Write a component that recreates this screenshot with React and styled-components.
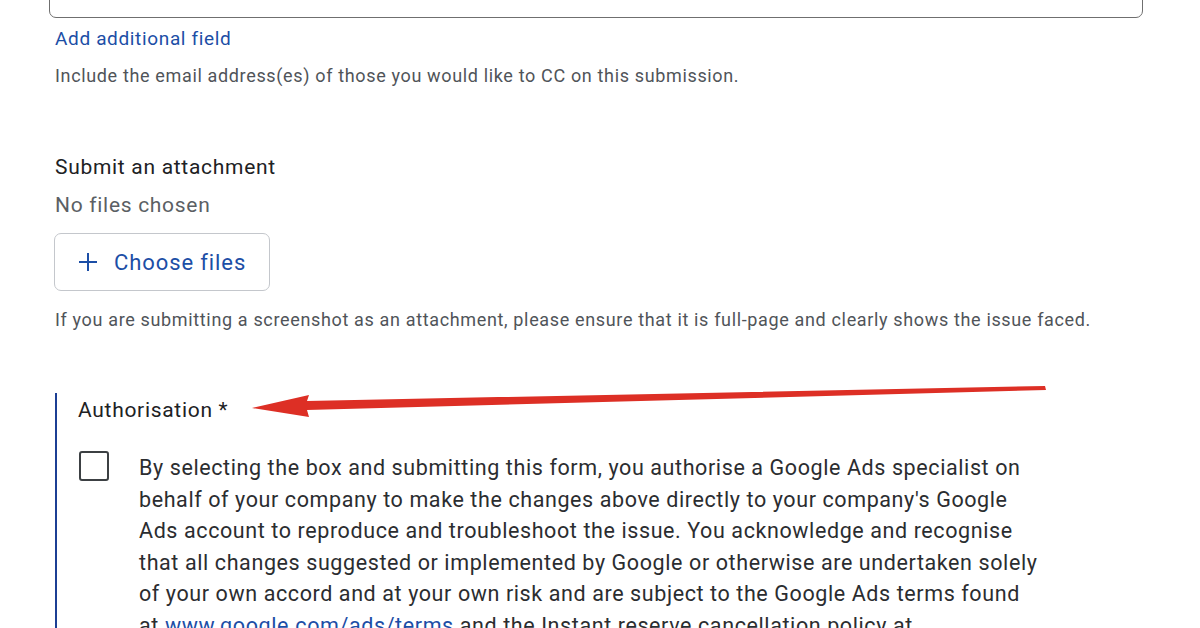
import React from 'react';
import styled, { createGlobalStyle } from 'styled-components';

const GlobalStyle = createGlobalStyle`
  html, body {
    margin: 0;
    padding: 0;
    background: #fff;
    overflow: hidden;
  }
  body {
    font-family: Roboto, 'Liberation Sans', Arial, sans-serif;
    -webkit-font-smoothing: antialiased;
  }
`;

const Page = styled.div`
  width: 1200px;
  height: 628px;
  overflow: hidden;
  padding-left: 55px;
  box-sizing: border-box;
`;

const TextBox = styled.div`
  width: 1094px;
  height: 50px;
  margin: -32px 0 0 -6px;
  border: 1px solid #6f6f6f;
  border-radius: 7px;
  box-sizing: border-box;
`;

const LinkButton = styled.a`
  display: block;
  margin-top: 9px;
  font-size: 19px;
  line-height: 24px;
  letter-spacing: 0.65px;
  color: #1c4ea6;
  text-decoration: none;
  cursor: pointer;
`;

const Helper = styled.p`
  margin: ${(p) => p.$top || 0}px 0 0;
  font-size: 18px;
  line-height: 24px;
  letter-spacing: 0.65px;
  color: #505459;
`;

const Label = styled.div`
  margin-top: ${(p) => p.$top || 0}px;
  font-size: 21px;
  line-height: 28px;
  letter-spacing: 0.7px;
  color: #202124;
`;

const Muted = styled.div`
  margin-top: 10px;
  font-size: 21px;
  line-height: 28px;
  letter-spacing: 0.7px;
  color: #5b5f64;
`;

const ChooseButton = styled.button`
  display: flex;
  align-items: center;
  gap: 16px;
  margin: 14px 0 0 -1px;
  height: 58px;
  padding: 0 23px 0 23px;
  background: #fff;
  border: 1px solid #c4c7cc;
  border-radius: 7px;
  font-family: inherit;
  font-size: 22px;
  letter-spacing: 0.9px;
  color: #1c4ea6;
  cursor: pointer;
`;

const Section = styled.section`
  position: relative;
  margin-top: 61px;
  padding: 3px 0 0 21px;
  border-left: 2px solid #1c3f94;
  height: 300px;
`;

const CheckRow = styled.div`
  display: flex;
  align-items: flex-start;
  gap: 30px;
  margin-top: 28px;
`;

const CheckBox = styled.span`
  flex: none;
  width: 30px;
  height: 30px;
  margin: -1px 0 0 1px;
  border: 2px solid #3c4043;
  border-radius: 3px;
  box-sizing: border-box;
`;

const Consent = styled.p`
  margin: 0;
  width: 902px;
  font-size: 21.5px;
  line-height: 31.6px;
  letter-spacing: 0.6px;
  color: #2b2d30;
`;

const InlineLink = styled.a`
  color: #1c4ea6;
  text-decoration: underline;
`;

const Annotation = styled.svg`
  position: absolute;
  left: 190px;
  top: -17px;
  pointer-events: none;
`;

function PlusIcon() {
  return (
    <svg width="20" height="20" viewBox="0 0 20 20">
      <path d="M10 1v18M1 10h18" stroke="#1c4ea6" strokeWidth="2" fill="none" />
    </svg>
  );
}

function RedArrow() {
  return (
    <Annotation width="810" height="45" viewBox="0 0 810 45">
      <polygon points="5,32 62,19 60,25 798,10 799,14 60,34 62,41" fill="#dd2f25" />
    </Annotation>
  );
}

export default function App() {
  return (
    <Page>
      <GlobalStyle />
      <TextBox />
      <LinkButton>Add additional field</LinkButton>
      <Helper $top={13}>
        Include the email address(es) of those you would like to CC on this submission.
      </Helper>

      <Label $top={65}>Submit an attachment</Label>
      <Muted>No files chosen</Muted>
      <ChooseButton>
        <PlusIcon />
        Choose files
      </ChooseButton>
      <Helper $top={17}>
        If you are submitting a screenshot as an attachment, please ensure that it is full-page and clearly shows the issue faced.
      </Helper>

      <Section>
        <RedArrow />
        <Label>Authorisation *</Label>
        <CheckRow>
          <CheckBox />
          <Consent>
            By selecting the box and submitting this form, you authorise a Google Ads specialist on
            behalf of your company to make the changes above directly to your company's Google
            Ads account to reproduce and troubleshoot the issue. You acknowledge and recognise
            that all changes suggested or implemented by Google or otherwise are undertaken solely
            of your own accord and at your own risk and are subject to the Google Ads terms found
            at <InlineLink>www.google.com/ads/terms</InlineLink> and the Instant reserve cancellation policy at
            www.google.com/ads/instantreserve/cancellationpolicy.
          </Consent>
        </CheckRow>
      </Section>
    </Page>
  );
}
